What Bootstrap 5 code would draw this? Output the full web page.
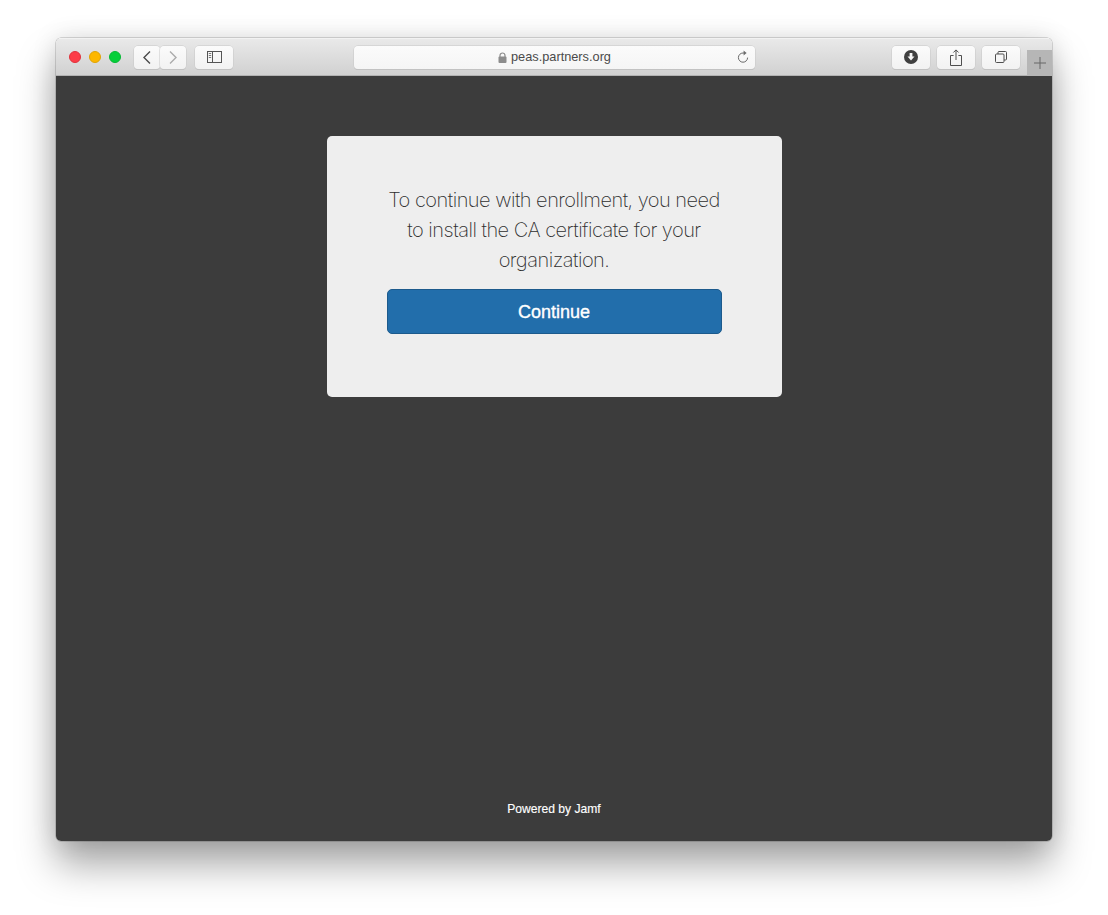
<!DOCTYPE html>
<html lang="en">
<head>
<meta charset="utf-8">
<title>peas.partners.org</title>
<link rel="stylesheet" href="https://cdn.jsdelivr.net/npm/bootstrap@5.3.0/dist/css/bootstrap.min.css">
<style>
html, body { height: 100%; background: #fff; }
body { padding: 38px 56px 74px; font-family: "Liberation Sans", Arial, sans-serif; overflow: hidden; }
.mac-window { height: 803px; width: 996px; border-radius: 5px; overflow: hidden; }
.mac-shadow { border-radius: 5px; box-shadow: 0 0 0 .5px rgba(0,0,0,.28), 0 24px 38px rgba(0,0,0,.34), 0 0 26px rgba(0,0,0,.12); }
.mac-toolbar { height: 38px; background: linear-gradient(#e9e9e9, #d1d1d1); border-top: 1px solid #f2f2f2; border-bottom: 1px solid #b2b2b2; padding-left: 13px; }
.tl-dot { width: 12px; height: 12px; border-radius: 50%; flex-shrink: 0; }
.tl-red { background: #fc3d48; border: 1px solid #e0323c; }
.tl-yellow { background: #fdb700; border: 1px solid #e0a406; margin-left: 8px; }
.tl-green { background: #05cf3a; border: 1px solid #06b934; margin-left: 8px; }
.tb-btn { height: 23px; background: linear-gradient(#fbfbfb, #f2f2f2); border: 0; border-radius: 4px; box-shadow: 0 0 0 .5px #c8c8c8, 0 1px 0 #bcbcbc; padding: 0; flex-shrink: 0; }
.tb-nav { width: 26px; }
.tb-wide { width: 38px; }
.tb-back { margin-left: 13px; }
.tb-side { margin-left: 9px; }
.url-field { width: 401px; height: 23px; margin-left: 121px; background: linear-gradient(#fbfbfb, #f5f5f5); border-radius: 4px; box-shadow: 0 0 0 .5px #c8c8c8, 0 1px 0 #bcbcbc; position: relative; font-size: 12.75px; color: #4a4a4a; flex-shrink: 0; }
.url-lock { margin-right: 4px; }
.url-reload { position: absolute; right: 5px; top: 4px; }
.tb-dl { margin-left: 137px; }
.tb-gap { margin-left: 7px; }
.new-tab { width: 25px; height: 26px; background: #b6b6b6; margin-left: 7px; align-self: flex-end; margin-bottom: -1px; flex-shrink: 0; }
.mac-page { background: #3c3c3c; height: 765px; padding-top: 60px; }
.enroll-box { width: 455px; height: 261px; background: #eee; border-radius: 5px; padding: 49px 60px 0; }
.enroll-text { font-family: Inter, "Liberation Sans", sans-serif; font-weight: 200; font-size: 20px; line-height: 30px; color: #2e2e2e; letter-spacing: -.51px; margin: 0 0 14px; white-space: nowrap; }
.enroll-btn { display: block; width: 335px; height: 45px; background: #226eab; border: 1px solid #1c5a8c; border-radius: 5px; color: #fff; font-size: 18px; line-height: 1; padding: 0; -webkit-text-stroke: .35px #fff; }
.enroll-btn:hover { background: #226eab; color: #fff; border-color: #1c5a8c; }
.powered { color: #fff; font-size: 12.1px; line-height: 14px; margin-bottom: 25px; -webkit-text-stroke: .15px #fff; }
</style>
</head>
<body>
<div class="mac-shadow">
<div class="mac-window d-flex flex-column">
  <div class="mac-toolbar d-flex align-items-center flex-shrink-0">
    <span class="tl-dot tl-red"></span>
    <span class="tl-dot tl-yellow"></span>
    <span class="tl-dot tl-green"></span>
    <button class="tb-btn tb-nav tb-back d-flex align-items-center justify-content-center" aria-label="Back">
      <svg width="10" height="15" viewBox="0 0 10 15"><path d="M8 1.5 2 7.5l6 6" fill="none" stroke="#4b4b4b" stroke-width="1.4"/></svg>
    </button>
    <button class="tb-btn tb-nav d-flex align-items-center justify-content-center" aria-label="Forward">
      <svg width="10" height="15" viewBox="0 0 10 15"><path d="M2 1.5l6 6-6 6" fill="none" stroke="#ababab" stroke-width="1.4"/></svg>
    </button>
    <button class="tb-btn tb-wide tb-side d-flex align-items-center justify-content-center" aria-label="Sidebar">
      <svg width="15" height="12" viewBox="0 0 15 12"><rect x=".5" y=".5" width="14" height="11" fill="none" stroke="#555" stroke-width="1"/><path d="M5.5 0v12" stroke="#555" stroke-width="1"/><path d="M1.8 2.5h2.4M1.8 4.5h2.4M1.8 6.5h2.4" stroke="#777" stroke-width="1"/></svg>
    </button>
    <div class="url-field d-flex align-items-center justify-content-center">
      <svg class="url-lock" width="9" height="11" viewBox="0 0 9 11"><path d="M2 5V3.5a2.5 2.5 0 0 1 5 0V5" fill="none" stroke="#8c8c8c" stroke-width="1.2"/><rect x="0.5" y="4.5" width="8" height="6.5" rx="1" fill="#8c8c8c"/></svg>
      <span>peas.partners.org</span>
      <svg class="url-reload" width="14" height="15" viewBox="0 0 14 15"><path d="M11.6 7.6a4.6 4.6 0 1 1-4.6-4.6h1.6" fill="none" stroke="#6a6a6a" stroke-width="1"/><path d="M7.6 .6 10.6 3 7.6 5.4z" fill="#6a6a6a"/></svg>
    </div>
    <button class="tb-btn tb-wide tb-dl d-flex align-items-center justify-content-center" aria-label="Downloads">
      <svg width="14" height="14" viewBox="0 0 14 14"><circle cx="7" cy="7" r="7" fill="#3f3f3f"/><path d="M5.6 3h2.8v3.6h2.1L7 10.6 3.5 6.6h2.1z" fill="#f6f6f6"/></svg>
    </button>
    <button class="tb-btn tb-wide tb-gap d-flex align-items-center justify-content-center" aria-label="Share">
      <svg width="12" height="17" viewBox="0 0 12 17"><path d="M3.6 6.5H.5v10h11v-10H8.4" fill="none" stroke="#4f4f4f" stroke-width="1"/><path d="M6 11V1M3.4 3.5 6 .9l2.6 2.6" fill="none" stroke="#4f4f4f" stroke-width="1"/></svg>
    </button>
    <button class="tb-btn tb-wide tb-gap d-flex align-items-center justify-content-center" aria-label="Tabs">
      <svg width="12" height="12" viewBox="0 0 12 12"><rect x=".5" y="3" width="8.5" height="8.5" rx="1" fill="none" stroke="#4f4f4f" stroke-width="1"/><path d="M3 3V1.5a1 1 0 0 1 1-1h6.5a1 1 0 0 1 1 1V8a1 1 0 0 1-1 1H9" fill="none" stroke="#4f4f4f" stroke-width="1"/></svg>
    </button>
    <div class="new-tab d-flex align-items-center justify-content-center">
      <svg width="12" height="12" viewBox="0 0 12 12"><path d="M6 0v12M0 6h12" stroke="#666" stroke-width="1"/></svg>
    </div>
  </div>
  <main class="mac-page d-flex flex-column align-items-center flex-grow-1">
    <div class="enroll-box text-center">
      <p class="enroll-text">To continue with enrollment, you need<br>to install the CA certificate for your<br>organization.</p>
      <a class="btn enroll-btn d-flex align-items-center justify-content-center" href="#">Continue</a>
    </div>
    <div class="powered mt-auto">Powered by Jamf</div>
  </main>
</div>
</div>
</body>
</html>
